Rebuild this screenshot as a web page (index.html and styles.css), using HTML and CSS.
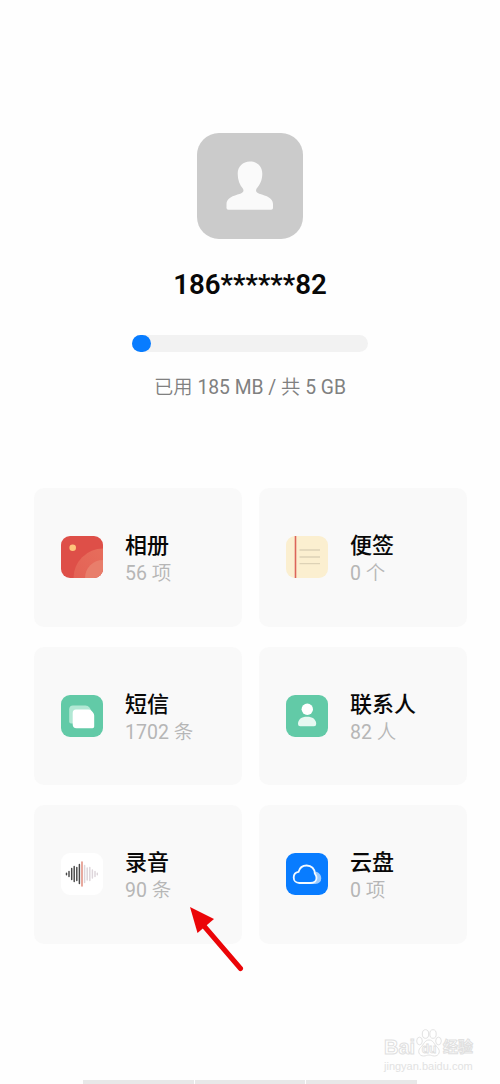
FILE: index.html
```html
<!DOCTYPE html>
<html lang="zh-CN">
<head>
<meta charset="utf-8">
<title>云服务</title>
<link rel="stylesheet" href="styles.css">
</head>
<body>
<main class="page">
  <header class="profile">
    <svg class="avatar" viewBox="0 0 106 106">
      <rect width="106" height="106" rx="22" fill="#cbcbcb"/>
      <path d="M53 28.500c7.200 0 12.300 5 12.300 12.200 0 6.500-2.500 11.300-5.800 15-1.100 2.400-.3 3.900 2.700 5 7.500 2.200 13.800 4.200 13.800 10.200v3.900c0 1.200-.7 1.900-1.900 1.900H31.400c-1.200 0-1.900-.7-1.900-1.900v-3.900c0-6 6.300-8 13.800-10.200 3-1.100 3.800-2.600 2.700-5-3.300-3.700-5.300-8.500-5.300-15C40.700 33.500 45.800 28.500 53 28.500z" fill="#fafafa"/>
    </svg>
    <h1 class="phone">186******82</h1>
    <div class="meter"><div class="meter-fill"></div></div>
    <p class="usage"><span class="thin">已用</span> 185 MB / <span class="thin">共</span> 5 GB</p>
  </header>

  <section class="grid">
    <article class="card">
      <svg class="icon" viewBox="0 0 42 42">
        <defs>
          <clipPath id="tile"><rect width="42" height="42" rx="9"/></clipPath>
          <linearGradient id="outer" x1="1" y1="0" x2="0" y2="1"><stop offset="0" stop-color="#e8735f"/><stop offset="1" stop-color="#e25c52"/></linearGradient>
        </defs>
        <g clip-path="url(#tile)">
          <rect width="42" height="42" fill="#de4f48"/>
          <circle cx="42" cy="42" r="29.500" fill="url(#outer)"/>
          <circle cx="42" cy="42" r="18" fill="#e87e6b"/>
        </g>
        <circle cx="11.700" cy="11.800" r="3.300" fill="#ffc67c"/>
      </svg>
      <div class="label"><h2>相册</h2><p>56 <span class="thin">项</span></p></div>
    </article>
    <article class="card">
      <svg class="icon" viewBox="0 0 42 42">
        <rect width="42" height="42" rx="9" fill="#fbefd0"/>
        <path d="M13.500 14H34M13.500 21H34M13.500 27.700H34" stroke="#ddd2b6" stroke-width="1.300"/>
        <path d="M9.500 0V42" stroke="#dc655a" stroke-width="1.600"/>
      </svg>
      <div class="label"><h2>便签</h2><p>0 <span class="thin">个</span></p></div>
    </article>
    <article class="card">
      <svg class="icon" viewBox="0 0 42 42">
        <rect width="42" height="42" rx="9" fill="#62caa7"/>
        <path d="M12 10.500H24.500Q27 10.500 28.500 12.500L30 15V28.500H10Q8.200 28.500 8.200 26.500V14.300Q8.200 10.500 12 10.500z" fill="#b1e8d4"/>
        <path d="M15 14.500H27.500Q29.300 14.500 30.500 15.800L32 17.500Q33.200 18.800 33.200 20.500V31.500Q33.200 33.200 31.500 33.200H15.500Q11.700 33.200 11.700 29.500V18Q11.700 14.500 15 14.500z" fill="#fff"/>
      </svg>
      <div class="label"><h2>短信</h2><p>1702 <span class="thin">条</span></p></div>
    </article>
    <article class="card">
      <svg class="icon" viewBox="0 0 42 42">
        <rect width="42" height="42" rx="9" fill="#62caa7"/>
        <circle cx="21.300" cy="14.300" r="5.700" fill="#fff"/>
        <path d="M12 29C12 24.200 15.500 21.700 21 21.700S30.200 24.200 30.200 29Q30.200 31.200 28 31.200H14.200Q12 31.200 12 29z" fill="#e6f8f1"/>
      </svg>
      <div class="label"><h2>联系人</h2><p>82 <span class="thin">人</span></p></div>
    </article>
    <article class="card">
      <svg class="icon" viewBox="0 0 42 42">
        <rect width="42" height="42" rx="9" fill="#fff"/>
        <g fill="none" stroke-width="1.450" stroke-linecap="round">
          <path d="M5.500 20.300v1.400M8 18.500v5M10.700 15.500v11M13.200 13.500v15M15.800 14.500v13M18.400 11.500v19" stroke="#484848"/>
          <path d="M21 9v24" stroke="#df8878"/>
          <path d="M23.600 12.500v17M26.200 15v12M28.800 14.500v13M31.400 17v8M34 18.500v5M36.300 20.300v1.400" stroke="#ddd5da"/>
        </g>
      </svg>
      <div class="label"><h2>录音</h2><p>90 <span class="thin">条</span></p></div>
    </article>
    <article class="card">
      <svg class="icon" viewBox="0 0 42 42">
        <rect width="42" height="42" rx="9" fill="#087cff"/>
        <path d="M28 18.200C32 18.600 35.200 21.300 35.200 25.200Q35.200 30.500 29 31H22z" fill="#9dccff"/>
        <path d="M13.300 30H24.500C28.300 30 30.500 27.800 30.500 25 30.500 22.700 29.500 21.600 28.800 20.500 28.800 15.800 25.500 12.500 20.700 12.500 16.500 12.500 13.500 15 12.600 18.800 9.600 19.300 7.700 21.700 7.700 24.500 7.700 27.700 10 30 13.300 30z" fill="#087cff" stroke="#f4faff" stroke-width="1.800"/>
      </svg>
      <div class="label"><h2>云盘</h2><p>0 <span class="thin">项</span></p></div>
    </article>
  </section>

  <svg class="arrow" viewBox="0 0 56 66">
    <path d="M15 20L51.500 62.500" stroke="#eb0508" stroke-width="5" stroke-linecap="round"/>
    <path d="M1 1L25 13 8.500 27z" fill="#eb0508"/>
  </svg>

  <div class="watermark">
    <div class="wm-brand">
      <span class="wm-latin">Bai</span>
      <svg class="wm-paw" viewBox="0 0 26 28">
        <g fill="#fff" stroke="#e2e2e2" stroke-width="1">
          <ellipse cx="9.500" cy="5" rx="3.200" ry="4.300"/><ellipse cx="17" cy="5" rx="3.200" ry="4.300"/>
          <ellipse cx="3.500" cy="12" rx="2.800" ry="3.800"/><ellipse cx="22.500" cy="12" rx="2.800" ry="3.800"/>
          <path d="M13 11C8.500 11 8 15.500 4.500 18.500 1 22 3 27 7.500 27 10 27 11 26 13 26S16 27 18.500 27C23 27 25 22 21.500 18.500 18 15.500 17.500 11 13 11z"/>
        </g>
        <text class="wm-du" x="13" y="24" text-anchor="middle">du</text>
      </svg>
      <span class="wm-cjk">经验</span>
    </div>
    <div class="wm-url">jingyan.baidu.com</div>
  </div>

  <footer class="segments"><i></i><i></i><i></i></footer>
</main>
</body>
</html>
```
FILE: styles.css
```css
* { box-sizing: border-box; }
body { margin: 0; background: #fefefe; font-family: Roboto, "Noto Sans CJK SC", sans-serif; }
h1, h2, p { margin: 0; font-weight: 400; }
.page { position: relative; display: flex; flex-direction: column; height: 1084px; overflow: hidden; }
.profile { display: flex; flex-direction: column; align-items: center; height: 488px; padding-top: 133px; }
.avatar { width: 106px; height: 106px; flex: none; }
.phone { margin-top: 29px; font-size: 27.700px; line-height: 34px; font-weight: 600; color: #080808; }
.meter { width: 236px; height: 17px; margin-top: 33px; border-radius: 9px; background: #f2f2f2; }
.meter-fill { width: 19px; height: 17px; border-radius: 9px; background: #087cff; }
.usage { margin-top: 23px; font-size: 19.300px; line-height: 26px; color: #808080; white-space: nowrap; }
.thin { font-weight: 350; }
.grid { display: grid; grid-template-columns: 208px 208px; grid-auto-rows: 138.500px; gap: 20px 17px; margin-left: 34px; }
.card { display: flex; align-items: center; gap: 22px; padding-left: 27px; border-radius: 10px; background: #f9f9f9; }
.icon { width: 42px; height: 42px; flex: none; }
.label { display: flex; flex-direction: column; padding-top: 6px; white-space: nowrap; }
.label h2 { font-size: 22px; line-height: 28px; font-weight: 500; color: #080808; }
.label p { font-size: 19.500px; line-height: 28px; color: #b6b6b6; }
.arrow { position: absolute; left: 189px; top: 906px; width: 56px; height: 66px; }
.watermark { position: absolute; left: 384px; top: 1029px; color: #fff; }
.wm-brand { display: flex; align-items: flex-end; height: 30px; font-weight: 700; }
.wm-latin, .wm-cjk { -webkit-text-stroke: 1px #e0e0e0; }
.wm-latin { width: 32px; font: 700 20px/24px "Liberation Sans", sans-serif; }
.wm-paw { width: 26px; height: 28px; margin-bottom: 2px; }
.wm-du { font: 700 12px "Liberation Sans", sans-serif; fill: #fff; stroke: #dedede; stroke-width: .8px; }
.wm-cjk { font-size: 15px; line-height: 24px; margin-left: 1px; }
.wm-url { margin-top: 1px; font: 11px/13px "Liberation Sans", sans-serif; color: #e2e2e2; }
.segments { display: flex; gap: 1px; margin: auto 83px 0; }
.segments i { flex: 1; height: 4px; background: #e8e8e8; }
```
